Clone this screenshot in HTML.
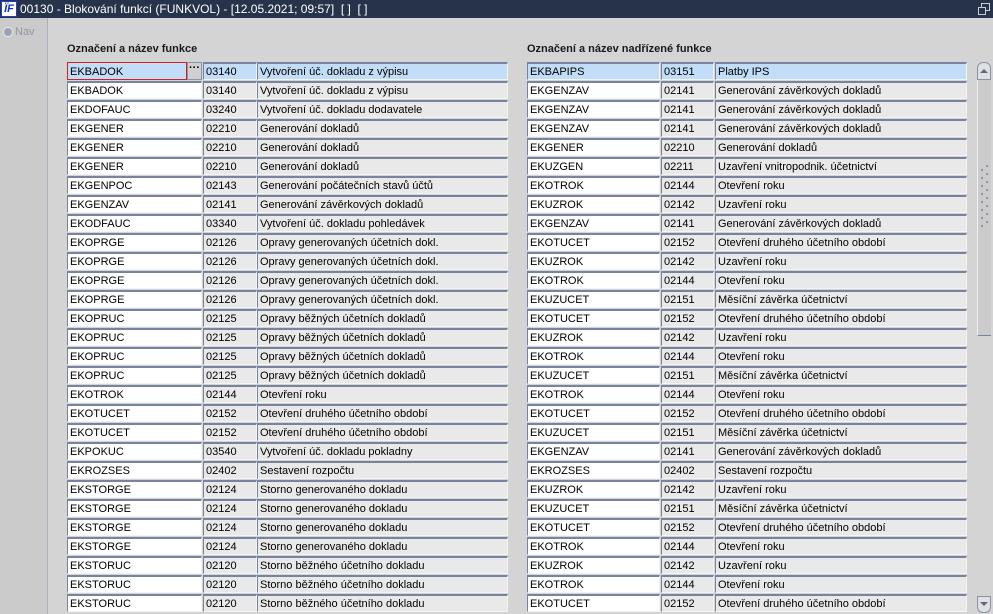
<!DOCTYPE html>
<html><head><meta charset="utf-8">
<style>
*{margin:0;padding:0;box-sizing:border-box}
body{width:993px;height:614px;overflow:hidden;background:#d4d4d4;font-family:"Liberation Sans",Arial,sans-serif;font-size:11px;color:#000;position:relative}
#title{position:absolute;left:0;top:0;width:993px;height:18px;background:#26334b;color:#fff;font-size:12px;line-height:18px}
#title .logo{position:absolute;left:1px;top:1px;width:16px;height:16px;background:#fff;border:1px solid #2040c0;color:#1030c0;font-weight:bold;font-style:italic;font-size:11px;line-height:14px;text-align:center}
#title .t{position:absolute;left:20px;top:0}
#nav{position:absolute;left:0;top:18px;width:48px;height:596px;background:#cbcbcb;border-right:1px solid #a9b0bd}
#nav .r{position:absolute;left:3px;top:9px;width:10px;height:10px;border-radius:50%;background:#9aa3b3;border:1px solid #e8e8e8}
#nav .l{position:absolute;left:15px;top:8px;color:#8e96a6;font-size:11px}
.h{position:absolute;top:43px;font-weight:bold;font-size:11px;color:#1a1a1a}
.f{position:absolute;height:18px;border-top:2px solid #7684a0;border-left:1px solid #7684a0;border-right:1px solid #f4f4f4;border-bottom:1px solid #f4f4f4;background:#e9e9e9;line-height:15px;padding-top:1px;padding-left:2px;white-space:nowrap;overflow:hidden}
.w{background:#fff}
.s{background:#c1ddf8}
</style></head><body>
<div id="title"><div class="logo">ÏF</div><div class="t">00130 - Blokování funkcí (FUNKVOL) - [12.05.2021; 09:57]&nbsp; [ ]&nbsp; [ ]</div>
<svg style="position:absolute;left:978px;top:3px" width="12" height="12"><rect x="3.5" y="0.5" width="8" height="7" fill="none" stroke="#c8ccd4"/><rect x="0.5" y="4.5" width="7" height="7" fill="#26334b" stroke="#c8ccd4"/></svg></div>
<div id="nav"><div class="r"></div><div class="l">Nav</div></div>
<div class="h" style="left:67px">Označení a název funkce</div>
<div class="h" style="left:527px">Označení a název nadřízené funkce</div>

<div class="f s" style="left:67px;top:62px;width:120px;border:1px solid #d02020;padding-top:2px">EKBADOK</div>
<div style="position:absolute;left:187px;top:62px;width:15px;height:18px;background:#d0d0d0;border:1px solid #8a94a8;font-weight:bold;line-height:10px;text-align:center">···</div>
<div class="f s" style="left:203px;top:62px;width:54px">03140</div>
<div class="f s" style="left:257px;top:62px;width:251px">Vytvoření úč. dokladu z výpisu</div>
<div class="f s" style="left:527px;top:62px;width:133px">EKBAPIPS</div>
<div class="f s" style="left:661px;top:62px;width:53px">03151</div>
<div class="f s" style="left:715px;top:62px;width:252px">Platby IPS</div>

<div style="position:absolute;left:977px;top:62px;width:14px;height:550px;background:#d4d4d4"></div>
<div style="position:absolute;left:977px;top:62px;width:14px;height:18px;border:1px solid #8a94a8;border-radius:6px 6px 0 0;background:#e0e0e0"><div style="position:absolute;left:2px;top:6px;width:0;height:0;border-left:4px solid transparent;border-right:4px solid transparent;border-bottom:4px solid #5a6a88"></div></div>
<div style="position:absolute;left:977px;top:80px;width:14px;height:256px;background:#cbcbcb;border-left:1px solid #f0f0f0;border-bottom:1px solid #7684a0"></div>
<svg style="position:absolute;left:980px;top:164px" width="10" height="70">
<g fill="#8a94a8"><rect x="1" y="5" width="2" height="2"/><rect x="6" y="1" width="2" height="2"/><rect x="1" y="13" width="2" height="2"/><rect x="6" y="9" width="2" height="2"/><rect x="1" y="21" width="2" height="2"/><rect x="6" y="17" width="2" height="2"/><rect x="1" y="29" width="2" height="2"/><rect x="6" y="25" width="2" height="2"/><rect x="1" y="37" width="2" height="2"/><rect x="6" y="33" width="2" height="2"/><rect x="1" y="45" width="2" height="2"/><rect x="6" y="41" width="2" height="2"/><rect x="1" y="53" width="2" height="2"/><rect x="6" y="49" width="2" height="2"/><rect x="1" y="61" width="2" height="2"/><rect x="6" y="57" width="2" height="2"/></g></svg>
<div style="position:absolute;left:977px;top:596px;width:14px;height:17px;border:1px solid #8a94a8;border-radius:0 0 6px 6px;background:#e0e0e0"><div style="position:absolute;left:2px;top:5px;width:0;height:0;border-left:4px solid transparent;border-right:4px solid transparent;border-top:4px solid #5a6a88"></div></div>

<div class="f w" style="left:67px;top:81px;width:135px">EKBADOK</div><div class="f" style="left:203px;top:81px;width:54px">03140</div><div class="f" style="left:257px;top:81px;width:251px">Vytvoření úč. dokladu z výpisu</div><div class="f w" style="left:527px;top:81px;width:133px">EKGENZAV</div><div class="f" style="left:661px;top:81px;width:53px">02141</div><div class="f" style="left:715px;top:81px;width:252px">Generování závěrkových dokladů</div>
<div class="f w" style="left:67px;top:100px;width:135px">EKDOFAUC</div><div class="f" style="left:203px;top:100px;width:54px">03240</div><div class="f" style="left:257px;top:100px;width:251px">Vytvoření úč. dokladu dodavatele</div><div class="f w" style="left:527px;top:100px;width:133px">EKGENZAV</div><div class="f" style="left:661px;top:100px;width:53px">02141</div><div class="f" style="left:715px;top:100px;width:252px">Generování závěrkových dokladů</div>
<div class="f w" style="left:67px;top:119px;width:135px">EKGENER</div><div class="f" style="left:203px;top:119px;width:54px">02210</div><div class="f" style="left:257px;top:119px;width:251px">Generování dokladů</div><div class="f w" style="left:527px;top:119px;width:133px">EKGENZAV</div><div class="f" style="left:661px;top:119px;width:53px">02141</div><div class="f" style="left:715px;top:119px;width:252px">Generování závěrkových dokladů</div>
<div class="f w" style="left:67px;top:138px;width:135px">EKGENER</div><div class="f" style="left:203px;top:138px;width:54px">02210</div><div class="f" style="left:257px;top:138px;width:251px">Generování dokladů</div><div class="f w" style="left:527px;top:138px;width:133px">EKGENER</div><div class="f" style="left:661px;top:138px;width:53px">02210</div><div class="f" style="left:715px;top:138px;width:252px">Generování dokladů</div>
<div class="f w" style="left:67px;top:157px;width:135px">EKGENER</div><div class="f" style="left:203px;top:157px;width:54px">02210</div><div class="f" style="left:257px;top:157px;width:251px">Generování dokladů</div><div class="f w" style="left:527px;top:157px;width:133px">EKUZGEN</div><div class="f" style="left:661px;top:157px;width:53px">02211</div><div class="f" style="left:715px;top:157px;width:252px">Uzavření vnitropodnik. účetnictví</div>
<div class="f w" style="left:67px;top:176px;width:135px">EKGENPOC</div><div class="f" style="left:203px;top:176px;width:54px">02143</div><div class="f" style="left:257px;top:176px;width:251px">Generování počátečních stavů účtů</div><div class="f w" style="left:527px;top:176px;width:133px">EKOTROK</div><div class="f" style="left:661px;top:176px;width:53px">02144</div><div class="f" style="left:715px;top:176px;width:252px">Otevření roku</div>
<div class="f w" style="left:67px;top:195px;width:135px">EKGENZAV</div><div class="f" style="left:203px;top:195px;width:54px">02141</div><div class="f" style="left:257px;top:195px;width:251px">Generování závěrkových dokladů</div><div class="f w" style="left:527px;top:195px;width:133px">EKUZROK</div><div class="f" style="left:661px;top:195px;width:53px">02142</div><div class="f" style="left:715px;top:195px;width:252px">Uzavření roku</div>
<div class="f w" style="left:67px;top:214px;width:135px">EKODFAUC</div><div class="f" style="left:203px;top:214px;width:54px">03340</div><div class="f" style="left:257px;top:214px;width:251px">Vytvoření úč. dokladu pohledávek</div><div class="f w" style="left:527px;top:214px;width:133px">EKGENZAV</div><div class="f" style="left:661px;top:214px;width:53px">02141</div><div class="f" style="left:715px;top:214px;width:252px">Generování závěrkových dokladů</div>
<div class="f w" style="left:67px;top:233px;width:135px">EKOPRGE</div><div class="f" style="left:203px;top:233px;width:54px">02126</div><div class="f" style="left:257px;top:233px;width:251px">Opravy generovaných účetních dokl.</div><div class="f w" style="left:527px;top:233px;width:133px">EKOTUCET</div><div class="f" style="left:661px;top:233px;width:53px">02152</div><div class="f" style="left:715px;top:233px;width:252px">Otevření druhého účetního období</div>
<div class="f w" style="left:67px;top:252px;width:135px">EKOPRGE</div><div class="f" style="left:203px;top:252px;width:54px">02126</div><div class="f" style="left:257px;top:252px;width:251px">Opravy generovaných účetních dokl.</div><div class="f w" style="left:527px;top:252px;width:133px">EKUZROK</div><div class="f" style="left:661px;top:252px;width:53px">02142</div><div class="f" style="left:715px;top:252px;width:252px">Uzavření roku</div>
<div class="f w" style="left:67px;top:271px;width:135px">EKOPRGE</div><div class="f" style="left:203px;top:271px;width:54px">02126</div><div class="f" style="left:257px;top:271px;width:251px">Opravy generovaných účetních dokl.</div><div class="f w" style="left:527px;top:271px;width:133px">EKOTROK</div><div class="f" style="left:661px;top:271px;width:53px">02144</div><div class="f" style="left:715px;top:271px;width:252px">Otevření roku</div>
<div class="f w" style="left:67px;top:290px;width:135px">EKOPRGE</div><div class="f" style="left:203px;top:290px;width:54px">02126</div><div class="f" style="left:257px;top:290px;width:251px">Opravy generovaných účetních dokl.</div><div class="f w" style="left:527px;top:290px;width:133px">EKUZUCET</div><div class="f" style="left:661px;top:290px;width:53px">02151</div><div class="f" style="left:715px;top:290px;width:252px">Měsíční závěrka účetnictví</div>
<div class="f w" style="left:67px;top:309px;width:135px">EKOPRUC</div><div class="f" style="left:203px;top:309px;width:54px">02125</div><div class="f" style="left:257px;top:309px;width:251px">Opravy běžných účetních dokladů</div><div class="f w" style="left:527px;top:309px;width:133px">EKOTUCET</div><div class="f" style="left:661px;top:309px;width:53px">02152</div><div class="f" style="left:715px;top:309px;width:252px">Otevření druhého účetního období</div>
<div class="f w" style="left:67px;top:328px;width:135px">EKOPRUC</div><div class="f" style="left:203px;top:328px;width:54px">02125</div><div class="f" style="left:257px;top:328px;width:251px">Opravy běžných účetních dokladů</div><div class="f w" style="left:527px;top:328px;width:133px">EKUZROK</div><div class="f" style="left:661px;top:328px;width:53px">02142</div><div class="f" style="left:715px;top:328px;width:252px">Uzavření roku</div>
<div class="f w" style="left:67px;top:347px;width:135px">EKOPRUC</div><div class="f" style="left:203px;top:347px;width:54px">02125</div><div class="f" style="left:257px;top:347px;width:251px">Opravy běžných účetních dokladů</div><div class="f w" style="left:527px;top:347px;width:133px">EKOTROK</div><div class="f" style="left:661px;top:347px;width:53px">02144</div><div class="f" style="left:715px;top:347px;width:252px">Otevření roku</div>
<div class="f w" style="left:67px;top:366px;width:135px">EKOPRUC</div><div class="f" style="left:203px;top:366px;width:54px">02125</div><div class="f" style="left:257px;top:366px;width:251px">Opravy běžných účetních dokladů</div><div class="f w" style="left:527px;top:366px;width:133px">EKUZUCET</div><div class="f" style="left:661px;top:366px;width:53px">02151</div><div class="f" style="left:715px;top:366px;width:252px">Měsíční závěrka účetnictví</div>
<div class="f w" style="left:67px;top:385px;width:135px">EKOTROK</div><div class="f" style="left:203px;top:385px;width:54px">02144</div><div class="f" style="left:257px;top:385px;width:251px">Otevření roku</div><div class="f w" style="left:527px;top:385px;width:133px">EKOTROK</div><div class="f" style="left:661px;top:385px;width:53px">02144</div><div class="f" style="left:715px;top:385px;width:252px">Otevření roku</div>
<div class="f w" style="left:67px;top:404px;width:135px">EKOTUCET</div><div class="f" style="left:203px;top:404px;width:54px">02152</div><div class="f" style="left:257px;top:404px;width:251px">Otevření druhého účetního období</div><div class="f w" style="left:527px;top:404px;width:133px">EKOTUCET</div><div class="f" style="left:661px;top:404px;width:53px">02152</div><div class="f" style="left:715px;top:404px;width:252px">Otevření druhého účetního období</div>
<div class="f w" style="left:67px;top:423px;width:135px">EKOTUCET</div><div class="f" style="left:203px;top:423px;width:54px">02152</div><div class="f" style="left:257px;top:423px;width:251px">Otevření druhého účetního období</div><div class="f w" style="left:527px;top:423px;width:133px">EKUZUCET</div><div class="f" style="left:661px;top:423px;width:53px">02151</div><div class="f" style="left:715px;top:423px;width:252px">Měsíční závěrka účetnictví</div>
<div class="f w" style="left:67px;top:442px;width:135px">EKPOKUC</div><div class="f" style="left:203px;top:442px;width:54px">03540</div><div class="f" style="left:257px;top:442px;width:251px">Vytvoření úč. dokladu pokladny</div><div class="f w" style="left:527px;top:442px;width:133px">EKGENZAV</div><div class="f" style="left:661px;top:442px;width:53px">02141</div><div class="f" style="left:715px;top:442px;width:252px">Generování závěrkových dokladů</div>
<div class="f w" style="left:67px;top:461px;width:135px">EKROZSES</div><div class="f" style="left:203px;top:461px;width:54px">02402</div><div class="f" style="left:257px;top:461px;width:251px">Sestavení rozpočtu</div><div class="f w" style="left:527px;top:461px;width:133px">EKROZSES</div><div class="f" style="left:661px;top:461px;width:53px">02402</div><div class="f" style="left:715px;top:461px;width:252px">Sestavení rozpočtu</div>
<div class="f w" style="left:67px;top:480px;width:135px">EKSTORGE</div><div class="f" style="left:203px;top:480px;width:54px">02124</div><div class="f" style="left:257px;top:480px;width:251px">Storno generovaného dokladu</div><div class="f w" style="left:527px;top:480px;width:133px">EKUZROK</div><div class="f" style="left:661px;top:480px;width:53px">02142</div><div class="f" style="left:715px;top:480px;width:252px">Uzavření roku</div>
<div class="f w" style="left:67px;top:499px;width:135px">EKSTORGE</div><div class="f" style="left:203px;top:499px;width:54px">02124</div><div class="f" style="left:257px;top:499px;width:251px">Storno generovaného dokladu</div><div class="f w" style="left:527px;top:499px;width:133px">EKUZUCET</div><div class="f" style="left:661px;top:499px;width:53px">02151</div><div class="f" style="left:715px;top:499px;width:252px">Měsíční závěrka účetnictví</div>
<div class="f w" style="left:67px;top:518px;width:135px">EKSTORGE</div><div class="f" style="left:203px;top:518px;width:54px">02124</div><div class="f" style="left:257px;top:518px;width:251px">Storno generovaného dokladu</div><div class="f w" style="left:527px;top:518px;width:133px">EKOTUCET</div><div class="f" style="left:661px;top:518px;width:53px">02152</div><div class="f" style="left:715px;top:518px;width:252px">Otevření druhého účetního období</div>
<div class="f w" style="left:67px;top:537px;width:135px">EKSTORGE</div><div class="f" style="left:203px;top:537px;width:54px">02124</div><div class="f" style="left:257px;top:537px;width:251px">Storno generovaného dokladu</div><div class="f w" style="left:527px;top:537px;width:133px">EKOTROK</div><div class="f" style="left:661px;top:537px;width:53px">02144</div><div class="f" style="left:715px;top:537px;width:252px">Otevření roku</div>
<div class="f w" style="left:67px;top:556px;width:135px">EKSTORUC</div><div class="f" style="left:203px;top:556px;width:54px">02120</div><div class="f" style="left:257px;top:556px;width:251px">Storno běžného účetního dokladu</div><div class="f w" style="left:527px;top:556px;width:133px">EKUZROK</div><div class="f" style="left:661px;top:556px;width:53px">02142</div><div class="f" style="left:715px;top:556px;width:252px">Uzavření roku</div>
<div class="f w" style="left:67px;top:575px;width:135px">EKSTORUC</div><div class="f" style="left:203px;top:575px;width:54px">02120</div><div class="f" style="left:257px;top:575px;width:251px">Storno běžného účetního dokladu</div><div class="f w" style="left:527px;top:575px;width:133px">EKOTROK</div><div class="f" style="left:661px;top:575px;width:53px">02144</div><div class="f" style="left:715px;top:575px;width:252px">Otevření roku</div>
<div class="f w" style="left:67px;top:594px;width:135px">EKSTORUC</div><div class="f" style="left:203px;top:594px;width:54px">02120</div><div class="f" style="left:257px;top:594px;width:251px">Storno běžného účetního dokladu</div><div class="f w" style="left:527px;top:594px;width:133px">EKOTUCET</div><div class="f" style="left:661px;top:594px;width:53px">02152</div><div class="f" style="left:715px;top:594px;width:252px">Otevření druhého účetního období</div>
</body></html>
